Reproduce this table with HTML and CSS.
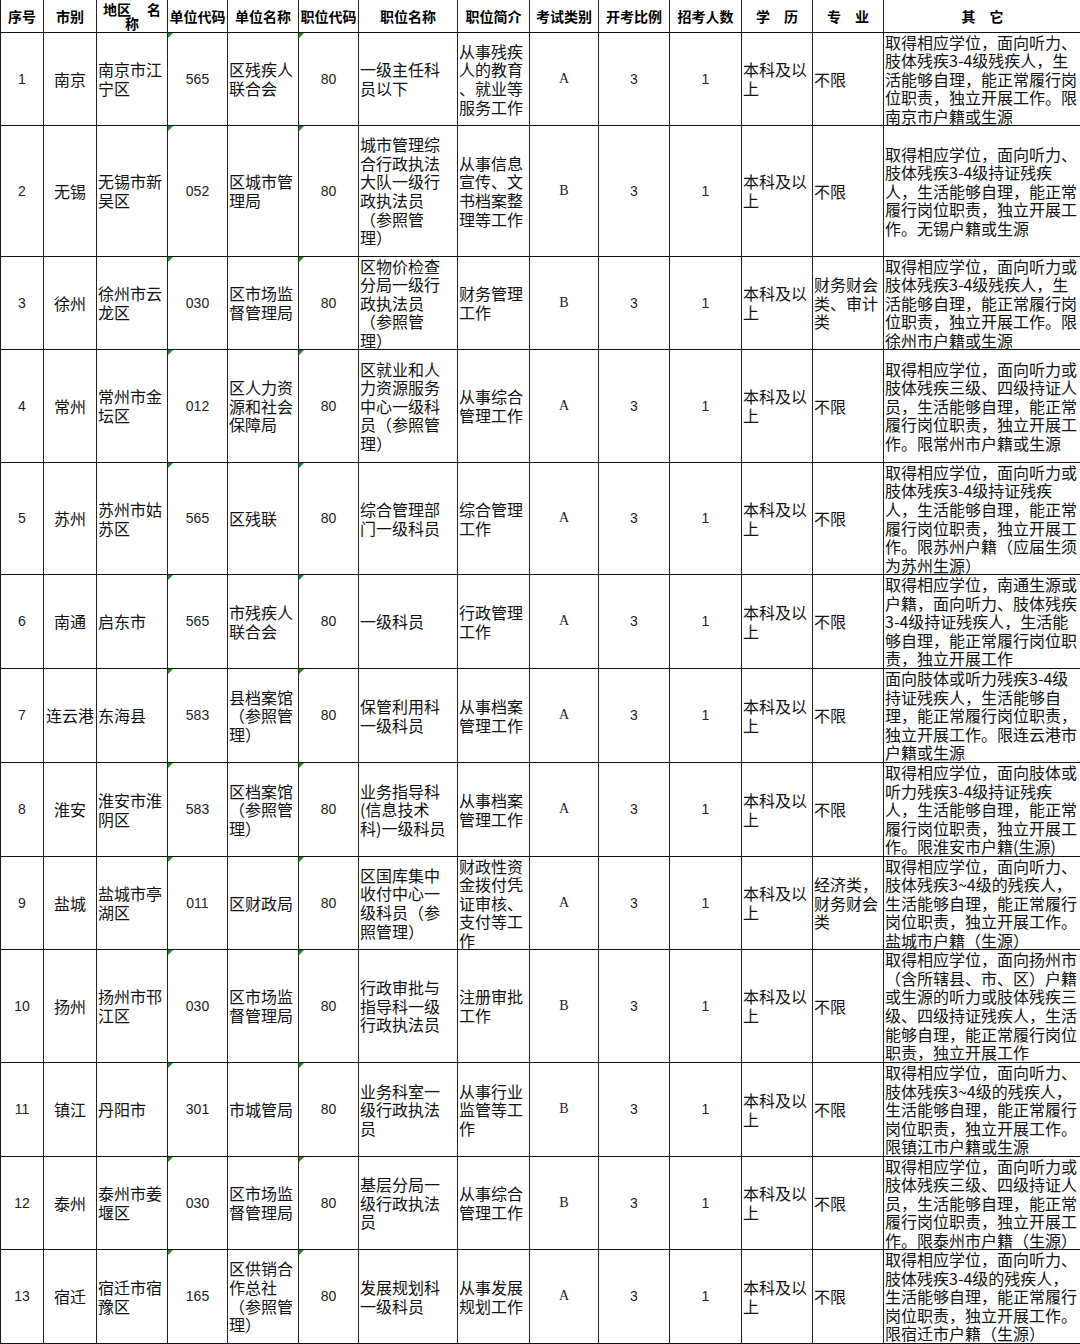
FILE: index.html
```html
<!DOCTYPE html>
<html lang="zh-CN">
<head>
<meta charset="utf-8">
<title>职位表</title>
<link rel="stylesheet" href="styles.css">
</head>
<body>
<div class="sheet">
  <div class="c h">序号</div>
  <div class="c h">市别</div>
  <div class="c h h2"><div class="h2a"><span>地区</span><span>名</span></div><div>称</div></div>
  <div class="c h">单位代码</div>
  <div class="c h">单位名称</div>
  <div class="c h">职位代码</div>
  <div class="c h">职位名称</div>
  <div class="c h">职位简介</div>
  <div class="c h">考试类别</div>
  <div class="c h">开考比例</div>
  <div class="c h">招考人数</div>
  <div class="c h">学　历</div>
  <div class="c h">专　业</div>
  <div class="c h">其　它</div>

  <div class="c n">1</div>
  <div class="c m">南京</div>
  <div class="c t"><span>南京市江<br>宁区</span></div>
  <div class="c n g">565</div>
  <div class="c t"><span>区残疾人<br>联合会</span></div>
  <div class="c n g">80</div>
  <div class="c t"><span>一级主任科<br>员以下</span></div>
  <div class="c t"><span>从事残疾<br>人的教育<br>、就业等<br>服务工作</span></div>
  <div class="c s">A</div>
  <div class="c n">3</div>
  <div class="c n">1</div>
  <div class="c t"><span>本科及以<br>上</span></div>
  <div class="c t"><span>不限</span></div>
  <div class="c t"><span>取得相应学位，面向听力、<br>肢体残疾3-4级残疾人，生<br>活能够自理，能正常履行岗<br>位职责，独立开展工作。限<br>南京市户籍或生源</span></div>

  <div class="c n">2</div>
  <div class="c m">无锡</div>
  <div class="c t"><span>无锡市新<br>吴区</span></div>
  <div class="c n g">052</div>
  <div class="c t"><span>区城市管<br>理局</span></div>
  <div class="c n g">80</div>
  <div class="c t"><span>城市管理综<br>合行政执法<br>大队一级行<br>政执法员<br>（参照管<br>理）</span></div>
  <div class="c t"><span>从事信息<br>宣传、文<br>书档案整<br>理等工作</span></div>
  <div class="c s">B</div>
  <div class="c n">3</div>
  <div class="c n">1</div>
  <div class="c t"><span>本科及以<br>上</span></div>
  <div class="c t"><span>不限</span></div>
  <div class="c t"><span>取得相应学位，面向听力、<br>肢体残疾3-4级持证残疾<br>人，生活能够自理，能正常<br>履行岗位职责，独立开展工<br>作。无锡户籍或生源</span></div>

  <div class="c n">3</div>
  <div class="c m">徐州</div>
  <div class="c t"><span>徐州市云<br>龙区</span></div>
  <div class="c n g">030</div>
  <div class="c t"><span>区市场监<br>督管理局</span></div>
  <div class="c n g">80</div>
  <div class="c t"><span>区物价检查<br>分局一级行<br>政执法员<br>（参照管<br>理）</span></div>
  <div class="c t"><span>财务管理<br>工作</span></div>
  <div class="c s">B</div>
  <div class="c n">3</div>
  <div class="c n">1</div>
  <div class="c t"><span>本科及以<br>上</span></div>
  <div class="c t"><span>财务财会<br>类、审计<br>类</span></div>
  <div class="c t"><span>取得相应学位，面向听力或<br>肢体残疾3-4级残疾人，生<br>活能够自理，能正常履行岗<br>位职责，独立开展工作。限<br>徐州市户籍或生源</span></div>

  <div class="c n">4</div>
  <div class="c m">常州</div>
  <div class="c t"><span>常州市金<br>坛区</span></div>
  <div class="c n g">012</div>
  <div class="c t"><span>区人力资<br>源和社会<br>保障局</span></div>
  <div class="c n g">80</div>
  <div class="c t"><span>区就业和人<br>力资源服务<br>中心一级科<br>员（参照管<br>理）</span></div>
  <div class="c t"><span>从事综合<br>管理工作</span></div>
  <div class="c s">A</div>
  <div class="c n">3</div>
  <div class="c n">1</div>
  <div class="c t"><span>本科及以<br>上</span></div>
  <div class="c t"><span>不限</span></div>
  <div class="c t"><span>取得相应学位，面向听力或<br>肢体残疾三级、四级持证人<br>员，生活能够自理，能正常<br>履行岗位职责，独立开展工<br>作。限常州市户籍或生源</span></div>

  <div class="c n">5</div>
  <div class="c m">苏州</div>
  <div class="c t"><span>苏州市姑<br>苏区</span></div>
  <div class="c n g">565</div>
  <div class="c t"><span>区残联</span></div>
  <div class="c n g">80</div>
  <div class="c t"><span>综合管理部<br>门一级科员</span></div>
  <div class="c t"><span>综合管理<br>工作</span></div>
  <div class="c s">A</div>
  <div class="c n">3</div>
  <div class="c n">1</div>
  <div class="c t"><span>本科及以<br>上</span></div>
  <div class="c t"><span>不限</span></div>
  <div class="c t"><span>取得相应学位，面向听力或<br>肢体残疾3-4级持证残疾<br>人，生活能够自理，能正常<br>履行岗位职责，独立开展工<br>作。限苏州户籍（应届生须<br>为苏州生源）</span></div>

  <div class="c n">6</div>
  <div class="c m">南通</div>
  <div class="c t"><span>启东市</span></div>
  <div class="c n g">565</div>
  <div class="c t"><span>市残疾人<br>联合会</span></div>
  <div class="c n g">80</div>
  <div class="c t"><span>一级科员</span></div>
  <div class="c t"><span>行政管理<br>工作</span></div>
  <div class="c s">A</div>
  <div class="c n">3</div>
  <div class="c n">1</div>
  <div class="c t"><span>本科及以<br>上</span></div>
  <div class="c t"><span>不限</span></div>
  <div class="c t"><span>取得相应学位，南通生源或<br>户籍，面向听力、肢体残疾<br>3-4级持证残疾人，生活能<br>够自理，能正常履行岗位职<br>责，独立开展工作</span></div>

  <div class="c n">7</div>
  <div class="c m">连云港</div>
  <div class="c t"><span>东海县</span></div>
  <div class="c n g">583</div>
  <div class="c t"><span>县档案馆<br>（参照管<br>理）</span></div>
  <div class="c n g">80</div>
  <div class="c t"><span>保管利用科<br>一级科员</span></div>
  <div class="c t"><span>从事档案<br>管理工作</span></div>
  <div class="c s">A</div>
  <div class="c n">3</div>
  <div class="c n">1</div>
  <div class="c t"><span>本科及以<br>上</span></div>
  <div class="c t"><span>不限</span></div>
  <div class="c t"><span>面向肢体或听力残疾3-4级<br>持证残疾人，生活能够自<br>理，能正常履行岗位职责，<br>独立开展工作。限连云港市<br>户籍或生源</span></div>

  <div class="c n">8</div>
  <div class="c m">淮安</div>
  <div class="c t"><span>淮安市淮<br>阴区</span></div>
  <div class="c n g">583</div>
  <div class="c t"><span>区档案馆<br>（参照管<br>理）</span></div>
  <div class="c n g">80</div>
  <div class="c t"><span>业务指导科<br>(信息技术<br>科)一级科员</span></div>
  <div class="c t"><span>从事档案<br>管理工作</span></div>
  <div class="c s">A</div>
  <div class="c n">3</div>
  <div class="c n">1</div>
  <div class="c t"><span>本科及以<br>上</span></div>
  <div class="c t"><span>不限</span></div>
  <div class="c t"><span>取得相应学位，面向肢体或<br>听力残疾3-4级持证残疾<br>人，生活能够自理，能正常<br>履行岗位职责，独立开展工<br>作。限淮安市户籍(生源)</span></div>

  <div class="c n">9</div>
  <div class="c m">盐城</div>
  <div class="c t"><span>盐城市亭<br>湖区</span></div>
  <div class="c n g">011</div>
  <div class="c t"><span>区财政局</span></div>
  <div class="c n g">80</div>
  <div class="c t"><span>区国库集中<br>收付中心一<br>级科员（参<br>照管理）</span></div>
  <div class="c t"><span>财政性资<br>金拨付凭<br>证审核、<br>支付等工<br>作</span></div>
  <div class="c s">A</div>
  <div class="c n">3</div>
  <div class="c n">1</div>
  <div class="c t"><span>本科及以<br>上</span></div>
  <div class="c t"><span>经济类，<br>财务财会<br>类</span></div>
  <div class="c t"><span>取得相应学位，面向听力、<br>肢体残疾3~4级的残疾人，<br>生活能够自理，能正常履行<br>岗位职责，独立开展工作。<br>盐城市户籍（生源）</span></div>

  <div class="c n">10</div>
  <div class="c m">扬州</div>
  <div class="c t"><span>扬州市邗<br>江区</span></div>
  <div class="c n g">030</div>
  <div class="c t"><span>区市场监<br>督管理局</span></div>
  <div class="c n g">80</div>
  <div class="c t"><span>行政审批与<br>指导科一级<br>行政执法员</span></div>
  <div class="c t"><span>注册审批<br>工作</span></div>
  <div class="c s">B</div>
  <div class="c n">3</div>
  <div class="c n">1</div>
  <div class="c t"><span>本科及以<br>上</span></div>
  <div class="c t"><span>不限</span></div>
  <div class="c t"><span>取得相应学位，面向扬州市<br>（含所辖县、市、区）户籍<br>或生源的听力或肢体残疾三<br>级、四级持证残疾人，生活<br>能够自理，能正常履行岗位<br>职责，独立开展工作</span></div>

  <div class="c n">11</div>
  <div class="c m">镇江</div>
  <div class="c t"><span>丹阳市</span></div>
  <div class="c n g">301</div>
  <div class="c t"><span>市城管局</span></div>
  <div class="c n g">80</div>
  <div class="c t"><span>业务科室一<br>级行政执法<br>员</span></div>
  <div class="c t"><span>从事行业<br>监管等工<br>作</span></div>
  <div class="c s">B</div>
  <div class="c n">3</div>
  <div class="c n">1</div>
  <div class="c t"><span>本科及以<br>上</span></div>
  <div class="c t"><span>不限</span></div>
  <div class="c t"><span>取得相应学位，面向听力、<br>肢体残疾3~4级的残疾人，<br>生活能够自理，能正常履行<br>岗位职责，独立开展工作。<br>限镇江市户籍或生源</span></div>

  <div class="c n">12</div>
  <div class="c m">泰州</div>
  <div class="c t"><span>泰州市姜<br>堰区</span></div>
  <div class="c n g">030</div>
  <div class="c t"><span>区市场监<br>督管理局</span></div>
  <div class="c n g">80</div>
  <div class="c t"><span>基层分局一<br>级行政执法<br>员</span></div>
  <div class="c t"><span>从事综合<br>管理工作</span></div>
  <div class="c s">B</div>
  <div class="c n">3</div>
  <div class="c n">1</div>
  <div class="c t"><span>本科及以<br>上</span></div>
  <div class="c t"><span>不限</span></div>
  <div class="c t"><span>取得相应学位，面向听力或<br>肢体残疾三级、四级持证人<br>员，生活能够自理，能正常<br>履行岗位职责，独立开展工<br>作。限泰州市户籍（生源）</span></div>

  <div class="c n">13</div>
  <div class="c m">宿迁</div>
  <div class="c t"><span>宿迁市宿<br>豫区</span></div>
  <div class="c n g">165</div>
  <div class="c t"><span>区供销合<br>作总社<br>（参照管<br>理）</span></div>
  <div class="c n g">80</div>
  <div class="c t"><span>发展规划科<br>一级科员</span></div>
  <div class="c t"><span>从事发展<br>规划工作</span></div>
  <div class="c s">A</div>
  <div class="c n">3</div>
  <div class="c n">1</div>
  <div class="c t"><span>本科及以<br>上</span></div>
  <div class="c t"><span>不限</span></div>
  <div class="c t"><span>取得相应学位，面向听力、<br>肢体残疾3-4级的残疾人，<br>生活能够自理，能正常履行<br>岗位职责，独立开展工作。<br>限宿迁市户籍（生源）</span></div>
</div>
</body>
</html>
```

FILE: styles.css
```css
html, body {
  margin: 0;
  padding: 0;
  background: #fff;
  overflow: hidden;
}

.sheet {
  display: grid;
  width: 1081px;
  grid-template-columns: 43px 53px 71px 60px 71px 60px 99px 72px 69px 71px 72px 71px 71px 198px;
  grid-template-rows: 33px 93px 131px 93px 113px 112px 94px 94px 94px 93px 113px 94px 93px 94px;
  border-left: 1px solid #1a1a1a;
  box-sizing: border-box;
  font-family: "Noto Sans CJK SC", "Noto Sans", sans-serif;
  color: #111;
}

.c {
  position: relative;
  box-sizing: border-box;
  border-right: 1px solid #222;
  border-bottom: 1px solid #111;
  display: flex;
  align-items: center;
  overflow: hidden;
  font-size: 16px;
  line-height: 18.6px;
  white-space: nowrap;
}

.h {
  justify-content: center;
  font-weight: 700;
  font-size: 14px;
  line-height: 14px;
  color: #000;
}

.h2 {
  flex-direction: column;
  align-items: stretch;
  justify-content: center;
  line-height: 14px;
}

.h2 > div {
  text-align: center;
}

.h2a {
  display: flex;
  justify-content: space-between;
  padding: 0 6px 0 6px;
}

.t {
  justify-content: flex-start;
  padding-left: 1px;
}

.m {
  justify-content: center;
}

.n {
  justify-content: center;
  font-family: "Liberation Sans", Arial, sans-serif;
  font-size: 14px;
  color: #222;
}

.s {
  justify-content: center;
  font-family: "Liberation Serif", "Times New Roman", serif;
  font-size: 14px;
  color: #222;
}

.g::before {
  content: "";
  position: absolute;
  top: 0;
  left: 0;
  border-top: 5px solid #1b8e1b;
  border-right: 5px solid transparent;
}
```
